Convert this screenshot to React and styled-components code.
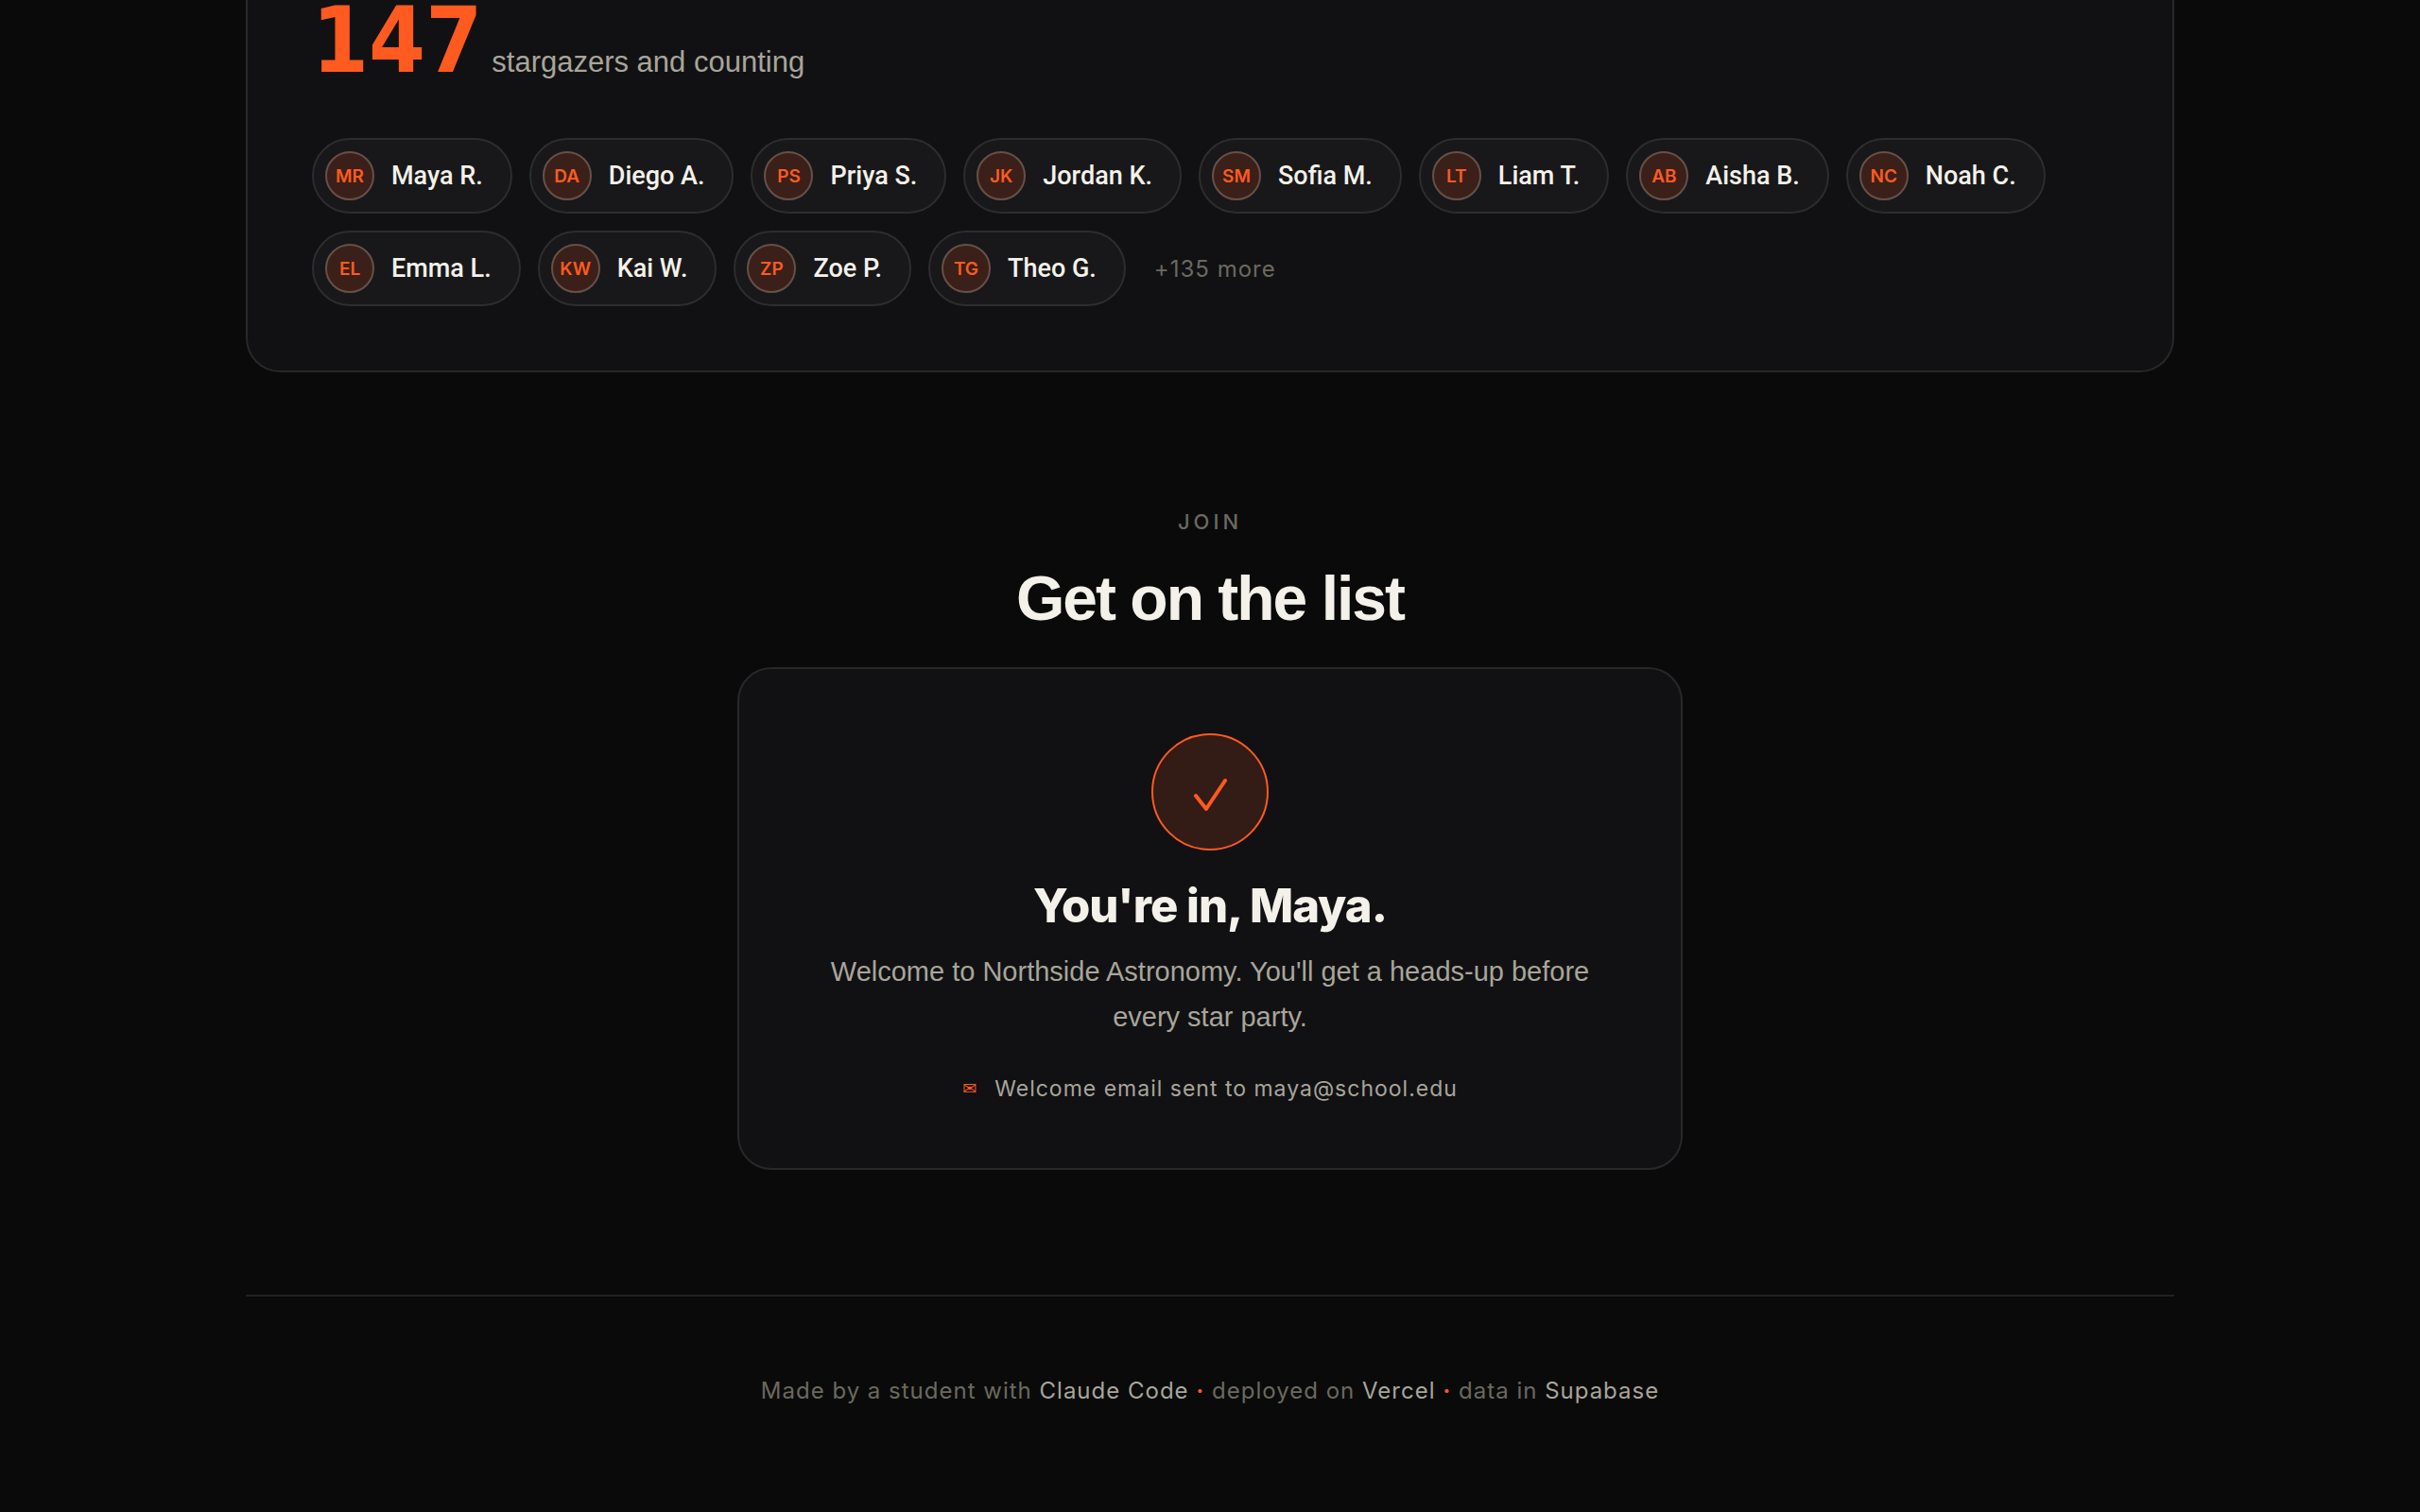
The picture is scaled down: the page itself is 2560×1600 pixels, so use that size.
import React from "react";
import styled, { createGlobalStyle } from "styled-components";

const GlobalStyle = createGlobalStyle`
    *, *::before, *::after {
        box-sizing: border-box;
    }
    body {
        margin: 0;
        background: #0a0a0a;
        color: #f4f1ea;
        font-family: "Liberation Sans", sans-serif;
        -webkit-font-smoothing: antialiased;
    }
    h2, h3, p, ul {
        margin: 0;
        padding: 0;
    }
`;

const Page = styled.div`
    min-height: 100vh;
    max-width: 2120px;
    margin: 0 auto;
    padding: 0 40px;
`;

const Card = styled.section`
    background: #111113;
    border: 2px solid #28282a;
    border-radius: 36px;
    padding: 68px;
`;
const MembersCard = styled(Card)`
    border-top: none;
    border-radius: 0 0 36px 36px;
    padding-top: 0;
`;
const Counter = styled.p`
    display: flex;
    align-items: baseline;
    gap: 10px;
    margin-bottom: 60px;
    font-size: 31px;
    color: #a8a59b;
`;
const Total = styled.strong`
    font-family: "DejaVu Sans Condensed", "DejaVu Sans", sans-serif;
    font-size: 96px;
    font-weight: 700;
    line-height: 86px;
    color: #ff5a1f;
`;

const Members = styled.ul`
    display: flex;
    flex-wrap: wrap;
    align-items: center;
    gap: 18px;
    list-style: none;
`;
const Member = styled.li`
    display: flex;
    align-items: center;
    gap: 18px;
    padding: 12px 29px 12px 12px;
    background: #18181a;
    border: 2px solid #2d2d2f;
    border-radius: 40px;
    font-family: Roboto, sans-serif;
    font-size: 27px;
    font-weight: 500;
`;
const Avatar = styled.span`
    display: grid;
    place-items: center;
    width: 52px;
    height: 52px;
    background: #3a2019;
    border: 2px solid #665048;
    border-radius: 50%;
    font-family: Inter, sans-serif;
    font-size: 19px;
    font-weight: 600;
    color: #ff5a1f;
`;
const More = styled.li`
    padding-left: 12px;
    font-family: Inter, sans-serif;
    font-size: 24px;
    letter-spacing: 1px;
    color: #6b6960;
`;

const Join = styled.section`
    padding: 144px 0 132px;
    text-align: center;
`;
const Eyebrow = styled.p`
    font-family: Inter, sans-serif;
    font-size: 22px;
    font-weight: 500;
    line-height: 28px;
    letter-spacing: 4px;
    color: #6b6960;
`;
const Title = styled.h2`
    margin: 28px 0 34px;
    font-size: 66px;
    font-weight: 700;
    line-height: 78px;
    letter-spacing: -2px;
`;
const Welcome = styled(Card)`
    display: flex;
    flex-direction: column;
    align-items: center;
    max-width: 1000px;
    margin: 0 auto;
`;
const CheckBadge = styled.span`
    display: grid;
    place-items: center;
    width: 124px;
    height: 124px;
    background: #341c16;
    border: 2px solid #ff5a1f;
    border-radius: 50%;
`;
const WelcomeTitle = styled.h3`
    margin: 28px 0 15px;
    font-family: Inter, sans-serif;
    font-size: 49px;
    font-weight: 800;
    line-height: 61px;
    letter-spacing: -1px;
`;
const WelcomeText = styled.p`
    font-size: 29px;
    line-height: 48px;
    color: #a8a59b;
`;
const EmailNote = styled.p`
    display: flex;
    align-items: center;
    gap: 18px;
    margin-top: 36px;
    font-family: Inter, sans-serif;
    font-size: 23px;
    line-height: 32px;
    letter-spacing: 1px;
    color: #a8a59b;
`;
const MailMark = styled.span`
    font-family: "DejaVu Sans", sans-serif;
    font-size: 18px;
    color: #ff5a1f;
`;

const Footer = styled.footer`
    padding: 84px 0 100px;
    border-top: 2px solid #222223;
    font-family: Inter, sans-serif;
    font-size: 24px;
    line-height: 32px;
    letter-spacing: 1px;
    text-align: center;
    color: #6b6960;
`;
const Tool = styled.span`
    color: #a8a59b;
`;
const Dot = styled.span`
    font-weight: 700;
    color: #ff5a1f;
`;

const members = [
    ["MR", "Maya R."],
    ["DA", "Diego A."],
    ["PS", "Priya S."],
    ["JK", "Jordan K."],
    ["SM", "Sofia M."],
    ["LT", "Liam T."],
    ["AB", "Aisha B."],
    ["NC", "Noah C."],
    ["EL", "Emma L."],
    ["KW", "Kai W."],
    ["ZP", "Zoe P."],
    ["TG", "Theo G."],
];

function Check() {
    return (
        <svg width="40" height="40" viewBox="0 0 40 40" fill="none" stroke="#ff5a1f" strokeWidth="4" strokeLinecap="round" strokeLinejoin="round" aria-hidden="true">
            <path d="M5 24 16 38 36 8" />
        </svg>
    );
}

function App() {
    return (
        <>
            <GlobalStyle />
            <Page>
                <MembersCard>
                    <Counter><Total>147</Total> stargazers and counting</Counter>
                    <Members>
                        {members.map(([initials, name]) => (
                            <Member key={name}>
                                <Avatar>{initials}</Avatar>
                                {name}
                            </Member>
                        ))}
                        <More>+135 more</More>
                    </Members>
                </MembersCard>
                <Join>
                    <Eyebrow>JOIN</Eyebrow>
                    <Title>Get on the list</Title>
                    <Welcome>
                        <CheckBadge><Check /></CheckBadge>
                        <WelcomeTitle>You're in, Maya.</WelcomeTitle>
                        <WelcomeText>Welcome to Northside Astronomy. You'll get a heads-up before every star party.</WelcomeText>
                        <EmailNote><MailMark>✉</MailMark> Welcome email sent to maya@school.edu</EmailNote>
                    </Welcome>
                </Join>
                <Footer>
                    Made by a student with <Tool>Claude Code</Tool> <Dot>·</Dot> deployed on <Tool>Vercel</Tool> <Dot>·</Dot> data in <Tool>Supabase</Tool>
                </Footer>
            </Page>
        </>
    );
}

export default App;
